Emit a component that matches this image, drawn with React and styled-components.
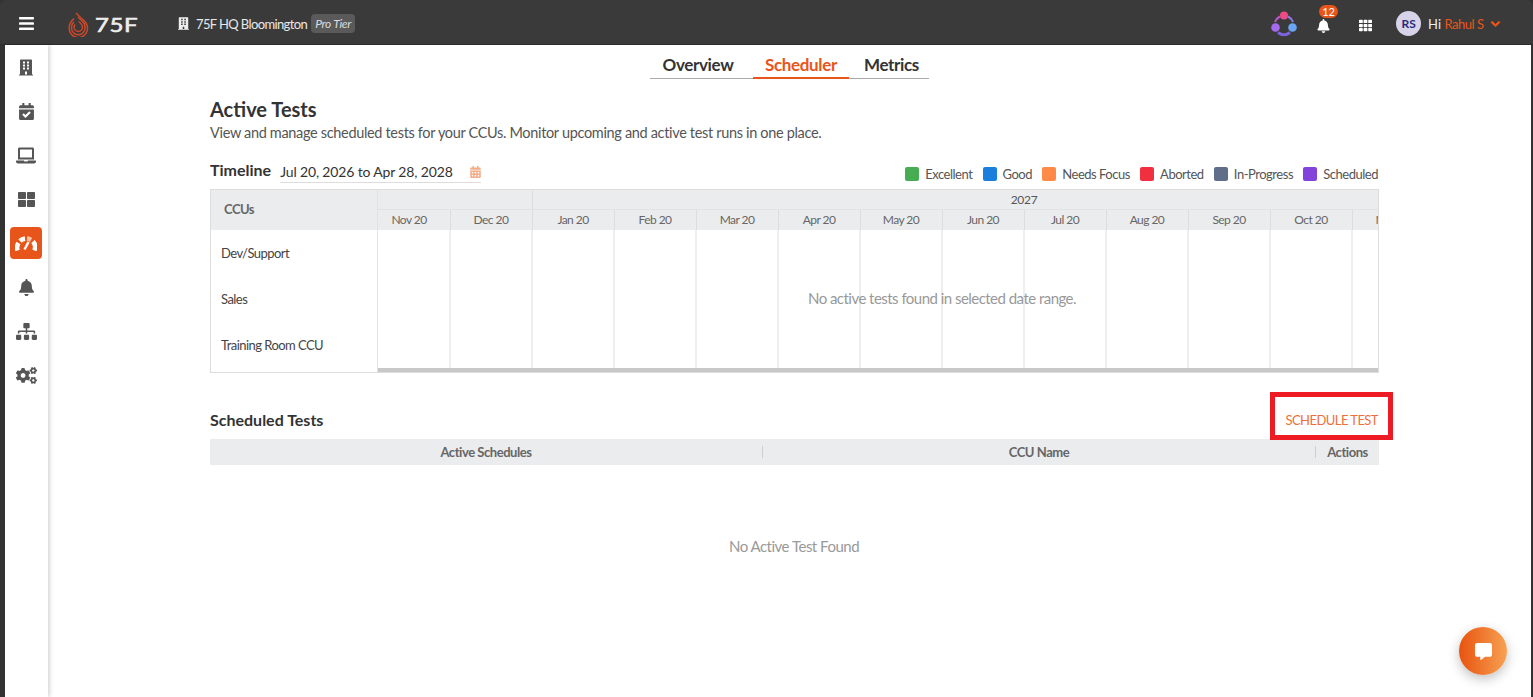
import React from "react";
import styled, { createGlobalStyle } from "styled-components";
import {
  FaBars, FaBuilding, FaBell, FaChevronDown, FaCalendarCheck, FaLaptop, FaThLarge,
  FaSitemap, FaCogs, FaCalendarAlt, FaTh, FaCommentAlt,
} from "react-icons/fa";

const Global = createGlobalStyle`
  html, body { margin: 0; padding: 0; background: #fff; overflow: hidden; }
  * { box-sizing: border-box; }
  body { font-family: Lato, "Liberation Sans", sans-serif; color: #333; }
`;

const Frame = styled.div`
  width: 1533px; height: 697px; background: #333; padding: 0 2px 0 5px;
  display: flex; flex-direction: column; position: relative; overflow: hidden;
`;
const Header = styled.header`
  flex: 0 0 45px; margin: 0 -2px 0 -5px; padding: 3px 32px 0 19px; background: #3a3a3a; color: #fff;
  border-bottom: 1px solid #2c2c2c; border-radius: 6px 6px 0 0;
  display: flex; align-items: center;
`;
const Menu = styled(FaBars)`
  width: 15px; height: 17px; color: #fff; margin-right: 34px;
`;
const Logo = styled.div`
  display: flex; align-items: center; gap: 6px; width: 110px;
`;
const LogoText = styled.span`
  font-size: 20px; font-weight: 400; letter-spacing: .5px; color: #eee; line-height: 1;
  transform: scaleX(1.2); transform-origin: left; -webkit-text-stroke: .6px #eee;
`;
const Site = styled.div`
  display: flex; align-items: center; font-size: 13px; letter-spacing: -.62px; color: #e8e8e8;
`;
const SiteIcon = styled(FaBuilding)`
  width: 11px; height: 13px; margin-right: 7px; color: #eee;
`;
const Tier = styled.span`
  margin-left: 4px; height: 19px; width: 44px; background: #5a5a5a; border-radius: 4px; letter-spacing: -.3px;
  font-size: 12px; font-style: italic; color: #ddd; display: flex; align-items: center; justify-content: center;
`;
const HeaderRight = styled.div`
  margin-left: auto; display: flex; align-items: center;
`;
const BellWrap = styled.div`
  position: relative; width: 13px; height: 14px; margin: 4px 0 0 20px; display: flex;
`;
const Bell = styled(FaBell)`
  width: 13px; height: 14px; color: #fff;
`;
const Badge = styled.span`
  position: absolute; left: 2px; top: -14px; width: 19px; height: 13px; border-radius: 7px; background: #e8551a;
  color: #fff; font-size: 11px; line-height: 13px; text-align: center;
`;
const Apps = styled(FaTh)`
  width: 13px; height: 13px; color: #fff; margin: 4px 0 0 29px;
`;
const Avatar = styled.div`
  width: 25px; height: 25px; border-radius: 50%; background: #d7d3e8; color: #2a2a7c; font-size: 12px; font-weight: 700;
  display: flex; align-items: center; justify-content: center; margin-left: 24px;
`;
const Hi = styled.span`
  font-size: 13px; color: #e8f0f4; margin-left: 7px;
`;
const UserName = styled.span`
  font-size: 13px; letter-spacing: -.5px; color: #e8551a; margin-left: 3.5px;
`;
const Chevron = styled(FaChevronDown)`
  width: 11px; height: 10px; color: #e8551a; margin-left: 6.5px; stroke: currentColor; stroke-width: 50px;
`;

const Body = styled.div`
  flex: 1; display: flex; background: #fff; min-height: 0;
`;
const Sidebar = styled.nav`
  flex: 0 0 43px; background: #fff; box-shadow: 2px 0 4px rgba(0,0,0,.16);
  display: flex; flex-direction: column; align-items: center; padding: 6px 1px 0 0; z-index: 1;
`;
const NavItem = styled.div`
  width: 32px; height: 32px; margin-bottom: 12px; border-radius: 4px; display: flex; align-items: center; justify-content: center;
  color: #555; background: ${p => (p.$active ? "#e8551a" : "transparent")};
  svg { width: ${p => p.$w || 17}px; height: ${p => p.$h || 17}px; }
`;
const Main = styled.main`
  flex: 1; min-width: 0; padding: 0 152px 0 162px; position: relative;
`;
const Tabs = styled.div`
  display: flex; width: 279px; margin: 9px auto 0; transform: translateX(-5px); border-bottom: 1px solid #aaa; height: 25px;
`;
const Tab = styled.div`
  height: 25px; font-size: 17px; font-weight: 700; letter-spacing: -.35px; text-align: center; line-height: 22px;
  width: ${p => p.$w}px; padding: ${p => p.$pad || "0"};
  color: ${p => (p.$active ? "#e8551a" : "#333")};
  border-bottom: ${p => (p.$active ? "2px solid #e8551a" : "none")};
`;
const Title = styled.h1`
  margin: 18px 0 0; font-size: 20px; font-weight: 700; line-height: 24px; color: #333;
`;
const Sub = styled.p`
  margin: 2px 0 0; font-size: 14.5px; letter-spacing: -.33px; line-height: 20px; color: #555;
`;
const TimelineBar = styled.div`
  display: flex; align-items: flex-end; justify-content: space-between; margin-top: 17px; height: 24px;
`;
const TimelineLeft = styled.div`
  display: flex; align-items: center;
`;
const TimelineLabel = styled.span`
  font-size: 16px; font-weight: 700; color: #333; line-height: 20px; margin-bottom: 4px;
`;
const DateBox = styled.div`
  display: flex; align-items: center; width: 201px; margin-left: 9px; height: 21px; border-bottom: 1px solid #ddd;
  font-size: 14px; letter-spacing: -.15px; color: #333; justify-content: space-between;
`;
const DateIcon = styled(FaCalendarAlt)`
  width: 11px; height: 12px; color: #f4ab88;
`;
const Legend = styled.div`
  display: flex; align-items: center; gap: 10.2px; margin: 0 1px 2px 0;
`;
const LegendItem = styled.div`
  display: flex; align-items: center; font-size: 13px; letter-spacing: -.48px; color: #555; height: 16px;
`;
const Swatch = styled.span`
  width: 14px; height: 14px; border-radius: 2px; margin-right: 6px; background: ${p => p.$c};
`;
const Timeline = styled.div`
  margin-top: 5px; height: 184px; border: 1px solid #ddd; display: flex; position: relative;
`;
const CcuCol = styled.div`
  flex: 0 0 167px; border-right: 1px solid #e2e2e2; display: flex; flex-direction: column;
`;
const CcuHead = styled.div`
  height: 40px; background: #ebecee; font-size: 13px; font-weight: 700; letter-spacing: -.5px; color: #666; padding-left: 13px; line-height: 38px;
`;
const CcuRow = styled.div`
  height: 46px; font-size: 13px; letter-spacing: -.55px; color: #444; padding-left: 10px; display: flex; align-items: center;
`;
const Chart = styled.div`
  flex: 1; min-width: 0; overflow: hidden; display: flex; flex-direction: column; position: relative;
`;
const Strip = styled.div`
  display: flex; height: 20px; background: #ebecee; flex: 0 0 20px; width: max-content; margin-left: -9px;
  box-shadow: 9px 0 0 #ebecee;
`;
const YearCell = styled.div`
  width: ${p => p.$w}px; flex: none; font-size: 12px; letter-spacing: -.3px; color: #555; text-align: center; line-height: 19px;
  border-right: 1px solid #ddd; border-bottom: 1px solid #e2e2e2; padding-right: 1px;
`;
const MonthCell = styled.div`
  width: 82px; flex: none; font-size: 12px; letter-spacing: -.55px; color: #666; text-align: center; line-height: 20px;
  border-right: 1px solid #ddd; padding-right: 1px;
`;
const Grid = styled.div`
  flex: 1; display: flex; width: max-content; margin-left: -9px;
`;
const GridCol = styled.div`
  width: 82px; flex: none; border-right: 2px solid #eeeeee;
`;
const Scrollbar = styled.div`
  flex: 0 0 4px; background: #c8c8c8;
`;
const Empty = styled.div`
  position: absolute; left: 0; right: 0; top: 98px; text-align: center; font-size: 15px; letter-spacing: -.53px; color: #999; line-height: 20px; padding-left: 128px;
`;
const SectionBar = styled.div`
  display: flex; align-items: center; justify-content: space-between; margin-top: 37px; height: 20px;
`;
const SectionTitle = styled.h2`
  margin: 0; font-size: 16px; font-weight: 700; color: #333; line-height: 20px;
`;
const ScheduleBtn = styled.button`
  border: none; background: none; padding: 0 1px 0 0; font-family: inherit; font-size: 13px; letter-spacing: -.55px; color: #ee6f3c; text-transform: uppercase; position: relative;
`;
const Annotation = styled.span`
  position: absolute; left: -15px; top: -20px; width: 123px; height: 48px; border: 5px solid #ed1c24;
`;
const TableHead = styled.div`
  margin-top: 9px; height: 26px; background: #ebecee; display: flex; align-items: center;
  font-size: 13px; font-weight: 700; letter-spacing: -.45px; color: #666;
`;
const Col = styled.div`
  width: ${p => p.$w}px; flex: none; text-align: center; line-height: 12px;
  border-right: ${p => (p.$last ? "none" : "1px solid #cfcfcf")};
`;
const NoTest = styled.div`
  margin-top: 71px; text-align: center; font-size: 15px; letter-spacing: -.5px; color: #999; line-height: 20px; padding-right: 1px;
`;
const Fab = styled.div`
  position: absolute; left: 1459px; top: 627px; width: 48px; height: 48px; border-radius: 50%;
  background: linear-gradient(90deg, #e8530f, #f7a152); box-shadow: 0 4px 12px rgba(0,0,0,.25);
  display: flex; align-items: center; justify-content: center; color: #fff;
  svg { width: 17px; height: 17px; margin-left: 1px; }
`;

const LogoMark = () => (
  <svg width="21" height="26" viewBox="0 0 21 26" fill="none" stroke="#c9482a" strokeWidth="1.5">
    <path d="M8 2l5 5c1 1 6 4 6.500 9.500a9.200 9.200 0 1 1-18.300 0C1.200 12 4 9.500 6 7.500" />
    <path d="M10 6l4 4c1.500 1.300 3 3.500 3 6.200a6.800 6.800 0 1 1-13.500 0c0-2 1-3.800 2.500-5" />
    <path d="M10.500 10.500c2 1.500 4 3 4 5.700a4.200 4.200 0 1 1-8.400 0c0-1 .4-1.900 1-2.700" />
  </svg>
);
const Triad = () => (
  <svg width="26" height="26" viewBox="0 0 26 26" fill="none">
    <path d="M9 5.500A10 10 0 0 0 4 11" stroke="#b85ad0" strokeWidth="2" />
    <path d="M17 5.500A10 10 0 0 1 22 11" stroke="#8d7be6" strokeWidth="2" />
    <path d="M7 21.500c4 3 8 3 12 0" stroke="#7c62dc" strokeWidth="3" />
    <circle cx="13" cy="4.500" r="4" fill="#ee4a86" />
    <circle cx="4.500" cy="16.500" r="4.300" fill="#a56bec" />
    <circle cx="21.500" cy="16.500" r="4.300" fill="#6aa4f4" />
  </svg>
);
const Gauge = () => (
  <svg viewBox="0 0 22 16" fill="none" stroke="#fff" strokeWidth="4.600">
    <path d="M2.600 15.500A8.500 8.500 0 0 1 3.500 8" />
    <path d="M5 6A8.500 8.500 0 0 1 10 3.600" />
    <path d="M12 3.600A8.500 8.500 0 0 1 16 5" stroke="#f6c3a8" />
    <path d="M18 6.500A8.500 8.500 0 0 1 19.400 15.500" />
    <path d="M9.500 14.500L13.500 7" strokeWidth="2.400" />
  </svg>
);

const months = ["Nov 20","Dec 20","Jan 20","Feb 20","Mar 20","Apr 20","May 20","Jun 20","Jul 20","Aug 20","Sep 20","Oct 20","Nov 20"];
const legend = [
  ["Excellent", "#46ad52"], ["Good", "#1a7fdc"], ["Needs Focus", "#ff8a47"],
  ["Aborted", "#f0303f"], ["In-Progress", "#5f6f8a"], ["Scheduled", "#8342dc"],
];

export default function App() {
  return (
    <Frame>
      <Global />
      <Header>
        <Menu />
        <Logo><LogoMark /><LogoText>75F</LogoText></Logo>
        <Site>
          <SiteIcon />
          75F HQ Bloomington
          <Tier>Pro Tier</Tier>
        </Site>
        <HeaderRight>
          <Triad />
          <BellWrap><Bell /><Badge>12</Badge></BellWrap>
          <Apps />
          <Avatar>RS</Avatar>
          <Hi>Hi</Hi>
          <UserName>Rahul S</UserName>
          <Chevron />
        </HeaderRight>
      </Header>
      <Body>
        <Sidebar>
          <NavItem $w={14}><FaBuilding /></NavItem>
          <NavItem $w={15}><FaCalendarCheck /></NavItem>
          <NavItem $w={20}><FaLaptop /></NavItem>
          <NavItem><FaThLarge /></NavItem>
          <NavItem $active $w={22} $h={16}><Gauge /></NavItem>
          <NavItem $w={15}><FaBell /></NavItem>
          <NavItem $w={21}><FaSitemap /></NavItem>
          <NavItem $w={21}><FaCogs /></NavItem>
        </Sidebar>
        <Main>
          <Tabs>
            <Tab $w={103} $pad="0 7px 0 0">Overview</Tab>
            <Tab $w={96} $active>Scheduler</Tab>
            <Tab $w={80} $pad="0 0 0 5px">Metrics</Tab>
          </Tabs>
          <Title>Active Tests</Title>
          <Sub>View and manage scheduled tests for your CCUs. Monitor upcoming and active test runs in one place.</Sub>
          <TimelineBar>
            <TimelineLeft>
              <TimelineLabel>Timeline</TimelineLabel>
              <DateBox>Jul 20, 2026 to Apr 28, 2028<DateIcon /></DateBox>
            </TimelineLeft>
            <Legend>
              {legend.map(([l, c]) => (
                <LegendItem key={l}><Swatch $c={c} />{l}</LegendItem>
              ))}
            </Legend>
          </TimelineBar>
          <Timeline>
            <CcuCol>
              <CcuHead>CCUs</CcuHead>
              <CcuRow>Dev/Support</CcuRow>
              <CcuRow>Sales</CcuRow>
              <CcuRow>Training Room CCU</CcuRow>
            </CcuCol>
            <Chart>
              <Strip>
                <YearCell $w={164} />
                <YearCell $w={984}>2027</YearCell>
              </Strip>
              <Strip>
                {months.map((m, i) => <MonthCell key={i}>{m}</MonthCell>)}
              </Strip>
              <Grid>
                {months.map((m, i) => <GridCol key={i} />)}
              </Grid>
              <Scrollbar />
              <Empty>No active tests found in selected date range.</Empty>
            </Chart>
          </Timeline>
          <SectionBar>
            <SectionTitle>Scheduled Tests</SectionTitle>
            <ScheduleBtn>Schedule Test<Annotation /></ScheduleBtn>
          </SectionBar>
          <TableHead>
            <Col $w={553}>Active Schedules</Col>
            <Col $w={553}>CCU Name</Col>
            <Col $w={63} $last>Actions</Col>
          </TableHead>
          <NoTest>No Active Test Found</NoTest>
        </Main>
      </Body>
      <Fab><FaCommentAlt /></Fab>
    </Frame>
  );
}
